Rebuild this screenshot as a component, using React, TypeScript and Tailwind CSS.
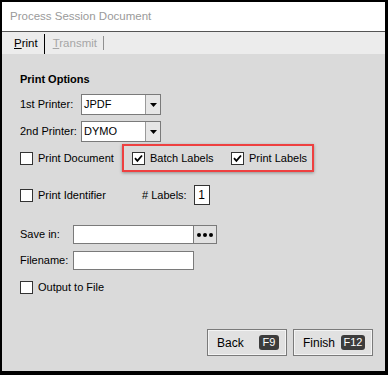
import React from "react";

const font = { fontFamily: '"Liberation Sans", Arial, sans-serif' };

function Check({ checked }: { checked?: boolean }) {
  return (
    <div className="w-[13px] h-[13px] shrink-0 border border-[#333333] bg-white flex items-center justify-center">
      {checked && (
        <svg width="9" height="9" viewBox="0 0 9 9">
          <path d="M1 4.2 L3.4 6.8 L8 1.5" stroke="#000" strokeWidth="1.8" fill="none" />
        </svg>
      )}
    </div>
  );
}

function Dropdown({ value }: { value: string }) {
  return (
    <div className="flex w-[80px] h-[21px] border border-[#7a7a7a] bg-white">
      <div className="flex-1 pl-[2px] flex items-center text-[11px] text-black">{value}</div>
      <div className="w-[15px] border-l border-[#9a9a9a] bg-[#e6e6e6] flex items-center justify-center">
        <svg width="7" height="4" viewBox="0 0 7 4">
          <path d="M0 0 H7 L3.5 4 Z" fill="#000" />
        </svg>
      </div>
    </div>
  );
}

function Btn({ label, k, kw }: { label: string; k: string; kw: string }) {
  return (
    <div className="w-[80px] h-[27px] border border-[#7a7a7a] bg-[#e1e1e1] shadow-[inset_0_0_0_1px_#f4f4f4] flex items-center justify-between pl-[9px] pr-[7px]">
      <span className="text-[12px] text-black">{label}</span>
      <span className={`${kw} h-[15px] rounded-[3px] bg-[#3c3c3c] text-white text-[11px] flex items-center justify-center`}>{k}</span>
    </div>
  );
}

export default function App() {
  return (
    <div
      style={font}
      className="w-[388px] h-[375px] bg-black border-l-[2px] border-t-[2px] border-r-[3px] border-b-[4px] border-black flex flex-col text-[11px] text-black"
    >
      <div className="h-[29px] bg-white flex items-center pl-[8px] text-[11.5px] text-[#9a9a9a]">
        Process Session Document
      </div>
      <div className="h-[1px] bg-[#555555]" />
      <div className="h-[22px] bg-[#ececec] flex items-stretch pl-[12px] text-[11.5px]">
        <div className="flex items-center pr-[6px] pt-[1px]">
          <span><span className="underline">P</span>rint</span>
        </div>
        <div className="w-[1px] bg-black mt-[2px]" />
        <div className="flex items-center pl-[8px] pr-[6px] text-[#a6a6a6] pt-[1px]">
          <span><span className="underline">T</span>ransmit</span>
        </div>
        <div className="w-[1px] bg-[#909090] my-[4px]" />
      </div>
      <div className="flex-1 bg-[#dadada] pl-[18px] flex flex-col">
        <div className="mt-[19px] h-[13px] leading-[13px] font-bold">Print Options</div>

        <div className="mt-[8px] flex items-center">
          <div className="w-[61px]">1st Printer:</div>
          <Dropdown value="JPDF" />
        </div>
        <div className="mt-[6px] flex items-center">
          <div className="w-[61px]">2nd Printer:</div>
          <Dropdown value="DYMO" />
        </div>

        <div className="mt-[2px] h-[28px] flex items-center">
          <div className="w-[102px] flex items-center gap-[5px]">
            <Check />
            <span>Print Document</span>
          </div>
          <div className="w-[192px] h-[28px] border-2 border-[#ee4040] shadow-[0_1px_3px_rgba(0,0,0,0.35)] flex items-center pl-[8px]">
            <div className="w-[99px] flex items-center gap-[5px]">
              <Check checked />
              <span>Batch Labels</span>
            </div>
            <div className="flex items-center gap-[5px]">
              <Check checked />
              <span>Print Labels</span>
            </div>
          </div>
        </div>

        <div className="mt-[13px] h-[20px] flex items-center">
          <div className="w-[122px] flex items-center gap-[5px]">
            <Check />
            <span>Print Identifier</span>
          </div>
          <span>#&nbsp;Labels:</span>
          <div className="ml-[7px] w-[16px] h-[20px] border border-[#333333] bg-white flex items-center justify-center text-[12px]">
            1
          </div>
        </div>

        <div className="mt-[20px] h-[19px] flex items-center">
          <div className="w-[53px]">Save in:</div>
          <div className="w-[121px] h-[19px] border border-[#7a7a7a] bg-white" />
          <div className="w-[23px] h-[19px] border border-l-0 border-[#7a7a7a] bg-[#e1e1e1] flex items-center justify-center gap-[2px]">
            <span className="w-[4px] h-[4px] rounded-full bg-black" />
            <span className="w-[4px] h-[4px] rounded-full bg-black" />
            <span className="w-[4px] h-[4px] rounded-full bg-black" />
          </div>
        </div>

        <div className="mt-[7px] h-[19px] flex items-center">
          <div className="w-[53px]">Filename:</div>
          <div className="w-[121px] h-[19px] border border-[#7a7a7a] bg-white" />
        </div>

        <div className="mt-[11px] h-[13px] flex items-center gap-[5px]">
          <Check />
          <span>Output to File</span>
        </div>

        <div className="mt-[35px] flex justify-end gap-[6px] pr-[12px]">
          <Btn label="Back" k="F9" kw="w-[20px]" />
          <Btn label="Finish" k="F12" kw="w-[24px]" />
        </div>
      </div>
    </div>
  );
}
